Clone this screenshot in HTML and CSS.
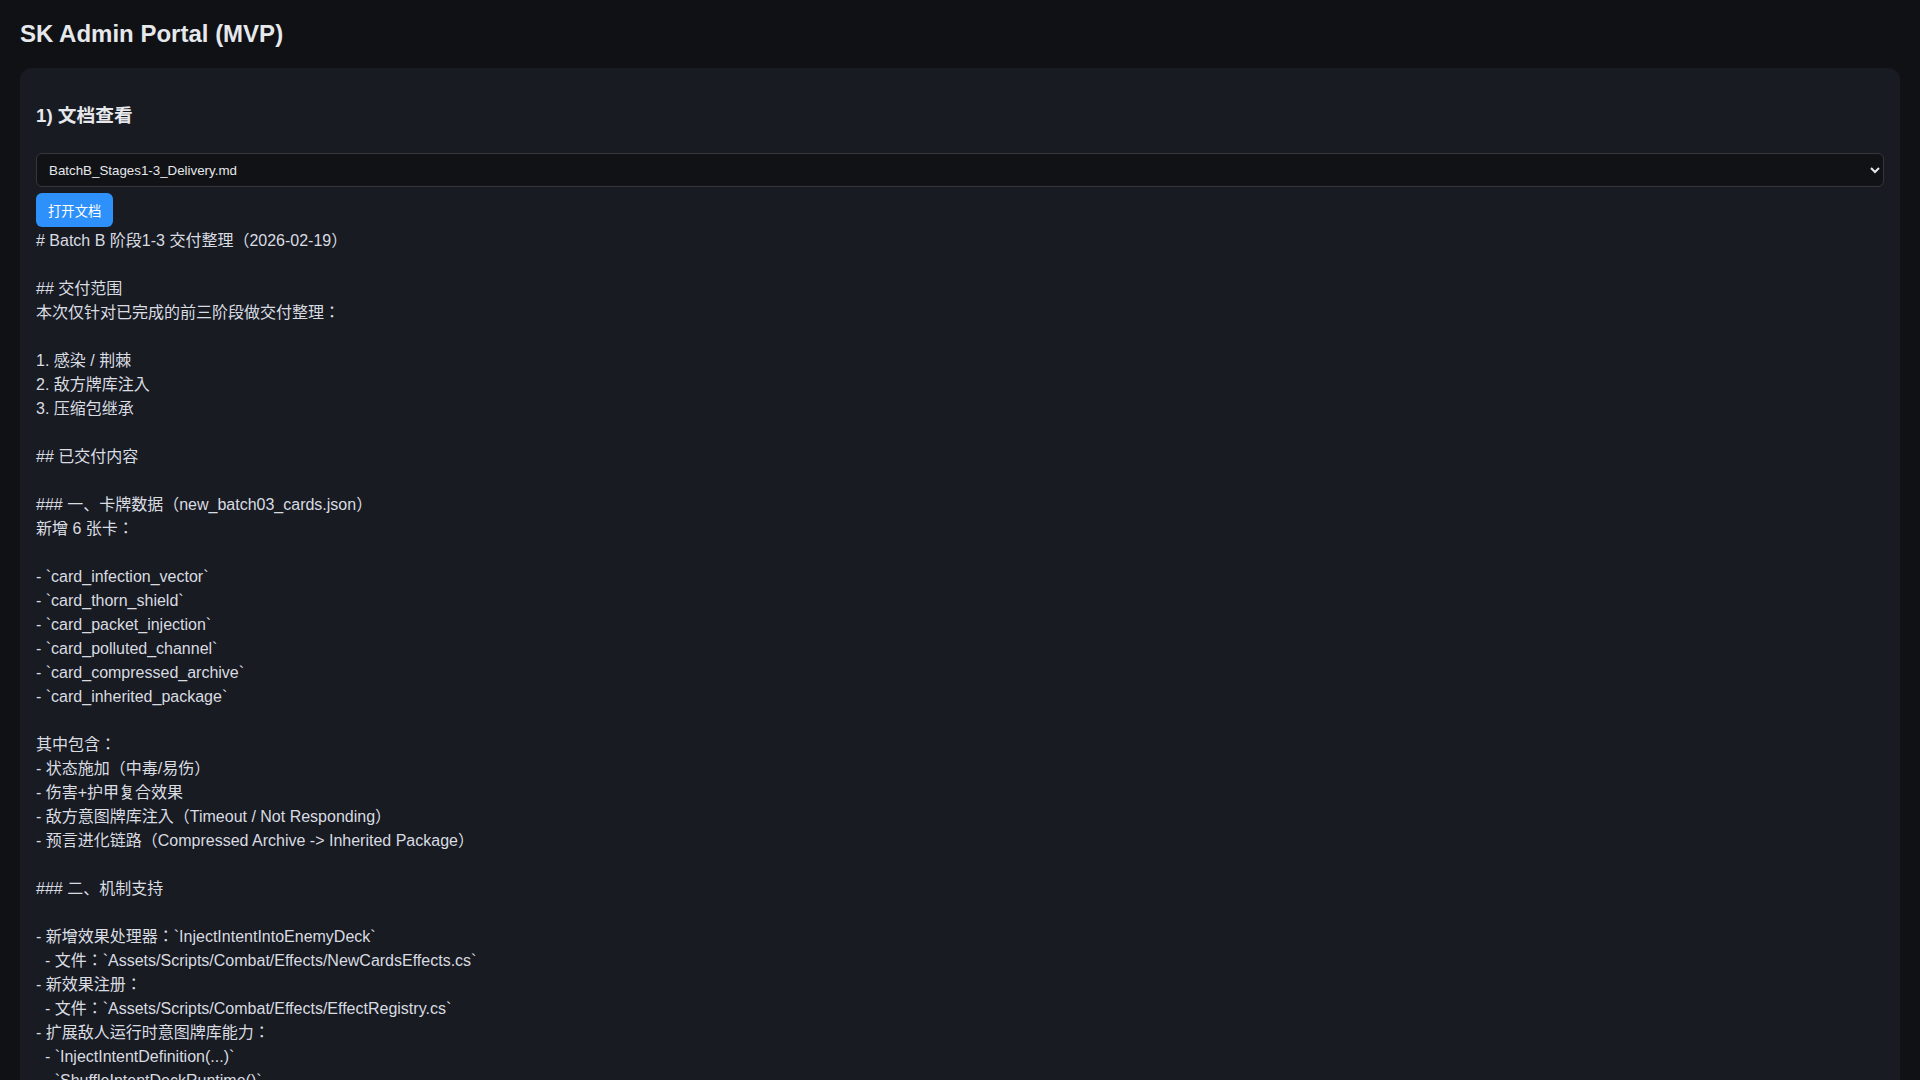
FILE: index.html
```html
<!DOCTYPE html>
<html lang="en">
<head>
    <meta charset="UTF-8">
    <meta name="viewport" content="width=device-width, initial-scale=1.0">
    <title>SK Admin Portal (MVP)</title>
    <link rel="stylesheet" href="styles.css">
</head>
<body>
    <h1 class="title">SK Admin Portal (MVP)</h1>

    <div class="panel">
        <h3 class="section-title">1) 文档查看</h3>

        <select class="doc-select" id="docSelect">
            <option>BatchB_Stages1-3_Delivery.md</option>
            <option>BatchA_Overview.md</option>
            <option>README.md</option>
        </select>
        <div>
            <button class="btn" id="openDoc">打开文档</button>
        </div>

<div class="doc-view" id="docView"># Batch B 阶段1-3 交付整理（2026-02-19）

## 交付范围
本次仅针对已完成的前三阶段做交付整理：

1. 感染 / 荆棘
2. 敌方牌库注入
3. 压缩包继承

## 已交付内容

### 一、卡牌数据（new_batch03_cards.json）
新增 6 张卡：

- `card_infection_vector`
- `card_thorn_shield`
- `card_packet_injection`
- `card_polluted_channel`
- `card_compressed_archive`
- `card_inherited_package`

其中包含：
- 状态施加（中毒/易伤）
- 伤害+护甲复合效果
- 敌方意图牌库注入（Timeout / Not Responding）
- 预言进化链路（Compressed Archive -> Inherited Package）

### 二、机制支持

- 新增效果处理器：`InjectIntentIntoEnemyDeck`
  - 文件：`Assets/Scripts/Combat/Effects/NewCardsEffects.cs`
- 新效果注册：
  - 文件：`Assets/Scripts/Combat/Effects/EffectRegistry.cs`
- 扩展敌人运行时意图牌库能力：
  - `InjectIntentDefinition(...)`
  - `ShuffleIntentDeckRuntime()`

### 三、验证

- 编译通过
- 三个阶段的卡牌均可在战斗中正常使用
</div>
    </div>
</body>
</html>
```

FILE: styles.css
```css
* {
    box-sizing: border-box;
}

body {
    margin: 0;
    padding: 20px;
    background: #0f1115;
    color: #e6e8ec;
    font-family: "Liberation Sans", Arial, "Noto Sans CJK JP", sans-serif;
    text-spacing-trim: space-all;
}

.title {
    font-size: 24px;
    font-weight: bold;
    margin: 0 0 20px 0;
}

.panel {
    background: #181b22;
    border-radius: 12px;
    padding: 16px;
}

.section-title {
    font-size: 18.72px;
    font-weight: bold;
    margin: 16px 0 26px 0;
}

.doc-select {
    display: block;
    width: 100%;
    height: 34px;
    padding: 0 8px;
    font-family: "Liberation Sans", Arial, "Noto Sans CJK JP", sans-serif;
    font-size: 13.33px;
    color: #e6e8ec;
    background: #111216;
    border: 1px solid #34363c;
    border-radius: 6px;
    margin-bottom: 6px;
}

.btn {
    font-family: "Liberation Sans", Arial, "Noto Sans CJK JP", sans-serif;
    font-size: 13.33px;
    color: #ffffff;
    background: #2e90fa;
    border: none;
    border-radius: 6px;
    padding: 0 12px;
    height: 34px;
    display: block;
}

.doc-view {
    margin-top: 2px;
    white-space: pre-wrap;
    font-size: 16px;
    line-height: 24px;
    color: #d9dce1;
}
```
